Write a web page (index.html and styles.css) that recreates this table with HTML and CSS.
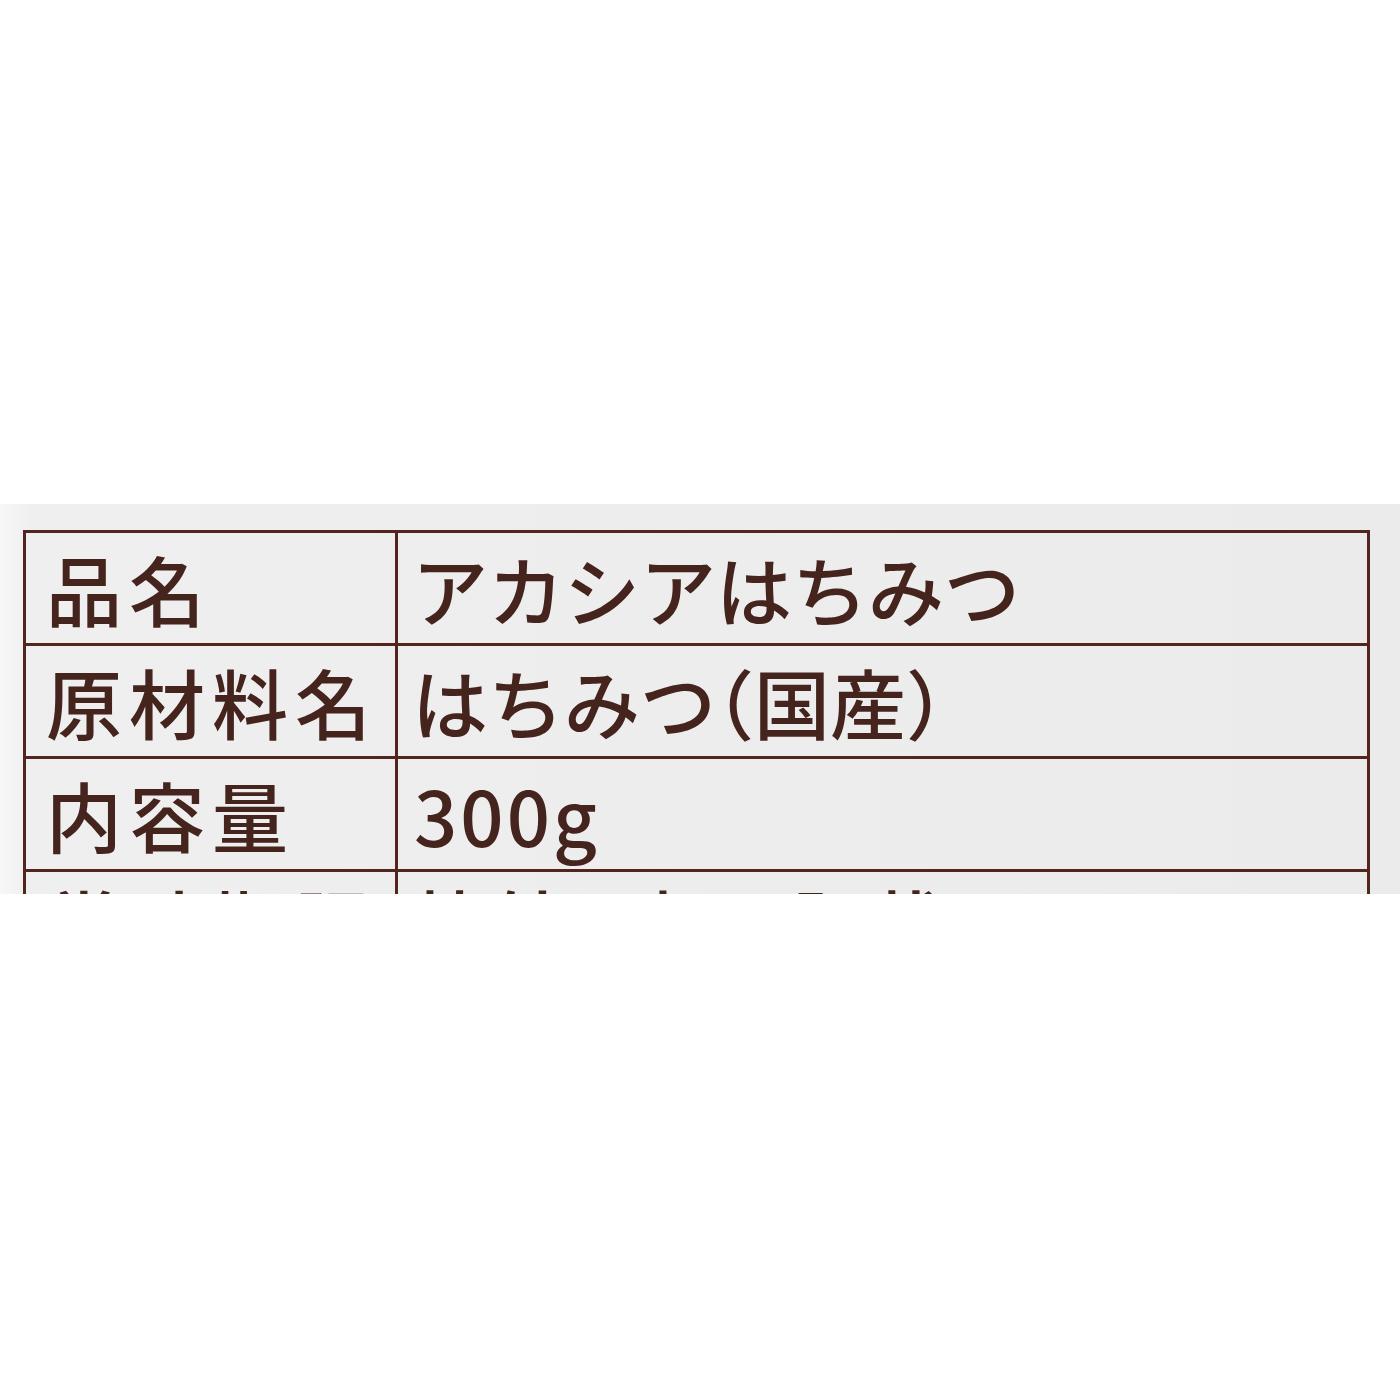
FILE: index.html
```html
<!DOCTYPE html>
<html lang="ja">
<head>
<meta charset="utf-8">
<title>アカシアはちみつ</title>
<link rel="stylesheet" href="styles.css">
</head>
<body>
<div class="band">
  <div class="label">
    <div class="cell key">品名</div>
    <div class="cell val">アカシアはちみつ</div>
    <div class="cell key">原材料名</div>
    <div class="cell val">はちみつ<span class="paren">（</span>国産<span class="paren">）</span></div>
    <div class="cell key">内容量</div>
    <div class="cell val num">300g</div>
    <div class="cell key last">賞味期限</div>
    <div class="cell val last">枠外下部に記載</div>
  </div>
</div>
</body>
</html>
```

FILE: styles.css
```css
html, body {
  margin: 0;
  padding: 0;
  background: #ffffff;
}
body {
  width: 1400px;
  height: 1400px;
  overflow: hidden;
  font-family: "Noto Sans CJK JP", "Noto Sans", sans-serif;
}
.band {
  margin-top: 504px;
  height: 390px;
  padding-top: 26px;
  padding-left: 23px;
  box-sizing: border-box;
  overflow: hidden;
  background: linear-gradient(to right, #f7f7f7 0px, #efefef 30px, #ededed 700px, #ebebeb 1400px);
}
.label {
  display: grid;
  grid-template-columns: 372px 972px;
  width: 1347px;
  border-top: 3px solid #52261f;
  border-left: 3px solid #52261f;
  box-sizing: border-box;
}
.cell {
  height: 113px;
  box-sizing: border-box;
  border-right: 3px solid #52261f;
  border-bottom: 3px solid #52261f;
  display: flex;
  align-items: center;
  font-size: 76px;
  font-weight: 500;
  line-height: 1;
  color: #45241e;
  white-space: nowrap;
}
.key {
  padding-left: 20px;
  letter-spacing: 7px;
}
.val {
  padding-left: 14px;
}
.num {
  padding-left: 16px;
  letter-spacing: 3px;
}
.last {
  align-items: flex-start;
  padding-top: 12px;
}
.paren {
  font-feature-settings: "halt" 1;
}
```
